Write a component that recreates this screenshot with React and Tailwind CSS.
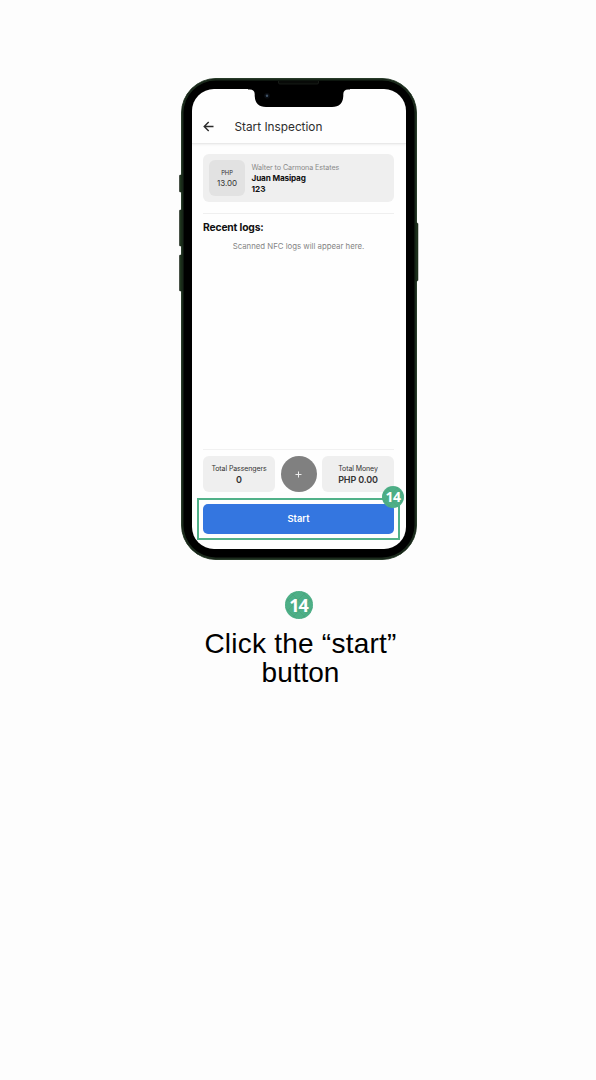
function Badge({ className }) {
  return (
    <span className={`relative flex items-center justify-center overflow-hidden rounded-full bg-[#4fb088] text-white ${className}`}>
      <svg className="absolute inset-0 h-full w-full" viewBox="0 0 28 28" fill="none" stroke="#3f9873" strokeWidth="0.6" opacity="0.6">
        <path d="M-2 14 14 30M-2 4 24 30M4 0 30 26M14 -2 30 14M14 -2 -2 14M24 -2 -2 24M30 4 4 30M30 14 14 30" />
      </svg>
      <span className="relative">14</span>
    </span>
  );
}

function Total({ label, value }) {
  return (
    <div className="flex h-9 w-[72px] flex-col items-center rounded-[6px] bg-[#efefef] pt-[7px] whitespace-nowrap text-[#333]">
      <span className="text-[7px] leading-[11px] tracking-[-0.1px]">{label}</span>
      <span className="text-[9px] leading-[11px] font-semibold tracking-[-0.15px]">{value}</span>
    </div>
  );
}

function Screen() {
  return (
    <div className="flex h-[460px] w-[214px] flex-col overflow-hidden rounded-[22px] bg-[#fefefe] font-['Inter',sans-serif] text-[#111]">
      <header className="flex h-[55px] shrink-0 items-end border-b border-[#e9e9e9] pb-[8px] pl-[11px] shadow-[0_1px_2px_rgba(0,0,0,0.06)]">
        <svg className="mb-[3px] h-[11px] w-[11px]" viewBox="0 0 11 11" fill="none" stroke="#2b2b2b" strokeWidth="1.4">
          <path d="M10.500 5.5H1.300M5.700 1 1.200 5.500l4.500 4.500" />
        </svg>
        <h1 className="ml-[20.5px] text-[11.8px] leading-[16px] whitespace-nowrap text-[#2d2d2d]">Start Inspection</h1>
      </header>
      <main className="flex flex-1 flex-col pr-[12px] pl-[11px] pt-[10px]">
        <section className="flex h-12 items-center rounded-[6px] bg-[#efefef] pl-[6px]">
          <div className="flex h-9 w-9 flex-col items-center rounded-[6px] bg-[#e2e2e2] pt-[8px] text-[#333]">
            <span className="text-[5.8px] leading-[10px]">PHP</span>
            <span className="text-[8px] leading-[10px]">13.00</span>
          </div>
          <div className="ml-[6.5px] flex flex-col pt-px whitespace-nowrap">
            <span className="text-[7.2px] leading-[11px] tracking-[-0.1px] text-[#8a8a8a]">Walter to Carmona Estates</span>
            <span className="text-[8.2px] leading-[10.5px] font-bold tracking-[-0.15px]">Juan Masipag</span>
            <span className="text-[8.2px] leading-[11px] font-bold">123</span>
          </div>
        </section>
        <div className="mt-[11px] h-px bg-[#efefef]" />
        <h2 className="mt-[6px] text-[10.3px] leading-[15px] font-bold tracking-[-0.15px]">Recent logs:</h2>
        <p className="mt-[6px] text-center text-[7.8px] leading-[11px] whitespace-nowrap text-[#858585]">Scanned NFC logs will appear here.</p>
        <div className="mt-auto h-px bg-[#f1f1f1]" />
        <div className="mt-[6px] flex items-center justify-between">
          <Total label="Total Passengers" value="0" />
          <button className="flex h-9 w-9 items-center justify-center rounded-full bg-[#808080]">
            <svg className="h-[7px] w-[7px]" viewBox="0 0 7 7" stroke="#eee" strokeWidth="1">
              <path d="M3.5 .5v6M.5 3.5h6" />
            </svg>
          </button>
          <Total label="Total Money" value="PHP 0.00" />
        </div>
        <div className="relative -mx-[6px] mt-[6px] mb-[9px] h-[42px] border-2 border-[#51b189] px-[4px] py-[4px]">
          <button className="block h-[30px] w-full rounded-[5px] bg-[#3476e0] text-[9.3px] font-semibold text-white">Start</button>
          <Badge className="!absolute -top-[14px] -right-[6px] h-[22px] w-[22px] font-['Open_Sans',sans-serif] text-[14px] leading-none font-bold tracking-[-0.6px]" />
        </div>
      </main>
    </div>
  );
}

function Phone() {
  return (
    <div className="relative flex h-[482px] w-[236px] justify-center rounded-[35px] border border-[#283c29] bg-black pt-[10px] shadow-[inset_0_0_0_1.5px_#1b2a1c]">
      <Screen />
      <svg className="absolute -top-px -left-[3px] h-[482px] w-[241px]" viewBox="179 78 241 482">
        <g fill="#20351f" stroke="#101a10" strokeWidth="0.5">
          <rect x="179.4" y="175" width="2.4" height="17" rx="1" />
          <rect x="179.4" y="210" width="2.4" height="36" rx="1" />
          <rect x="179.4" y="255" width="2.4" height="36" rx="1" />
          <rect x="415.8" y="223" width="2.2" height="58" rx="1" />
        </g>
        <path fill="#000" d="M248 85V89.500h2q4.500 0 4.700 4.500v2q.6 11 11.300 11h66q10.700 0 11.300-11v-2q.2-4.500 4.700-4.500h2V85z" />
        <path d="M278.500 81v2q0 1 1.500 1h37q1.500 0 1.500-1v-2" fill="#080a08" stroke="#242824" strokeWidth="0.6" />
        <circle cx="267" cy="95.800" r="2.800" fill="#0a0d12" />
        <circle cx="267" cy="95.800" r="1.200" fill="#405366" />
      </svg>
    </div>
  );
}

export default function App() {
  return (
    <div className="flex h-[1080px] w-[596px] flex-col items-center bg-[#fdfdfd] pt-[78px]">
      <div className="ml-[2px]">
        <Phone />
      </div>
      <Badge className="mt-[31px] ml-px h-7 w-7 font-['Open_Sans',sans-serif] text-[18px] leading-none font-bold tracking-[-1px]" />
      <p className="mt-[10px] ml-[5px] text-center font-['Liberation_Sans',sans-serif] text-[28px] leading-[29px] text-black">
        <span className="tracking-[0.23px]">Click the “start”</span>
        <br />
        button
      </p>
    </div>
  );
}
